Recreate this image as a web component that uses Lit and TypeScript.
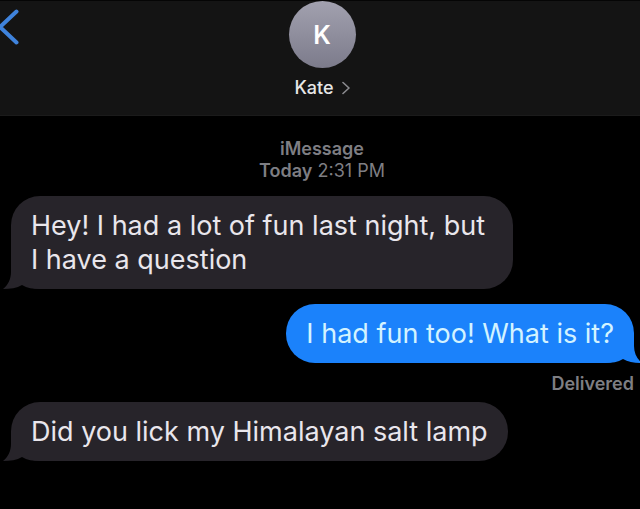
import { LitElement, html, css, svg } from "lit";
import { customElement, property } from "lit/decorators.js";

type Side = "received" | "sent";

interface Message {
  side: Side;
  text: string;
  status?: string;
}

const messages: Message[] = [
  { side: "received", text: "Hey! I had a lot of fun last night, but I have a question" },
  { side: "sent", text: "I had fun too! What is it?", status: "Delivered" },
  { side: "received", text: "Did you lick my Himalayan salt lamp" },
];

const receivedTail = svg`<path d="M8 0 V12 C8 19 5 25 0 29 C7 29 14 28 19 25 C24 28 30 29 37 29 V0 Z"/>`;
const sentTail = svg`<path d="M29 0 V12 C29 19 32 25 37 29 C30 29 23 28 18 25 C13 28 7 29 0 29 V0 Z"/>`;

@customElement("message-bubble")
export class MessageBubble extends LitElement {
  @property({ reflect: true }) side: Side = "received";

  static styles = css`
    :host {
      display: block;
      position: relative;
      isolation: isolate;
      box-sizing: border-box;
      max-width: 80.5%;
      padding: 13px 20px 12px;
      border-radius: 29px;
      background: #27242a;
      color: #e9e6ec;
      font-size: 27px;
      line-height: 34px;
    }
    :host([side="sent"]) {
      background: #1b82fb;
      color: #d3f3ff;
    }
    .tail {
      position: absolute;
      z-index: -1;
      bottom: 0;
      left: -8px;
      width: 37px;
      height: 29px;
      fill: #27242a;
    }
    :host([side="sent"]) .tail {
      left: auto;
      right: -8px;
      fill: #1b82fb;
    }
  `;

  render() {
    return html`
      <svg class="tail" viewBox="0 0 37 29" aria-hidden="true">
        ${this.side === "sent" ? sentTail : receivedTail}
      </svg>
      <slot></slot>
    `;
  }
}

@customElement("app-root")
export class AppRoot extends LitElement {
  static styles = css`
    :host {
      display: flex;
      flex-direction: column;
      min-height: 100vh;
      overflow: hidden;
      background: #000;
      font-family: Inter, "Liberation Sans", sans-serif;
    }
    button {
      padding: 0;
      border: 0;
      background: none;
      color: inherit;
      font: inherit;
      cursor: pointer;
    }
    svg {
      display: block;
    }
    .bar {
      display: grid;
      grid-template-columns: 1fr auto 1fr;
      align-items: start;
      padding: 0 0 15px 4px;
      border-top: 1px solid #050505;
      border-bottom: 1px solid #1b1b1b;
      background: #141414;
    }
    .back {
      justify-self: start;
      margin: 8px 0 0 -4px;
    }
    .contact {
      display: flex;
      flex-direction: column;
      align-items: center;
      gap: 8px;
    }
    .avatar {
      display: grid;
      place-items: center;
      width: 67px;
      height: 67px;
      border-radius: 50%;
      background: linear-gradient(#a2a1af, #7c7b8b);
      color: #fff;
      font-size: 25px;
      font-weight: 600;
    }
    .name {
      display: flex;
      align-items: center;
      gap: 8px;
      color: #e6e6e6;
      font-size: 18px;
      font-weight: 500;
      line-height: 24px;
    }
    .stamp {
      margin: 0;
      padding: 22px 0 14px 4px;
      color: #7e7e83;
      font-size: 18px;
      line-height: 22px;
      text-align: center;
    }
    .strong {
      font-weight: 600;
    }
    .thread {
      display: flex;
      flex-direction: column;
      gap: 7px;
      margin: 0;
      padding: 0 6px 40px 11px;
      list-style: none;
    }
    .row {
      display: flex;
      flex-direction: column;
      align-items: flex-start;
    }
    .row.received {
      padding-bottom: 8px;
    }
    .row.sent {
      align-items: flex-end;
    }
    .status {
      padding-top: 10px;
      color: #7e7e83;
      font-size: 18px;
      font-weight: 600;
      line-height: 22px;
    }
  `;

  render() {
    return html`
      <header class="bar">
        <button class="back" aria-label="Back">
          <svg width="20" height="38" viewBox="0 0 20 38" fill="none" stroke="#3f83dc"
            stroke-width="4" stroke-linecap="round" stroke-linejoin="round">
            <path d="M16.5 2.5 L0 18 L16.5 33.5" />
          </svg>
        </button>
        <button class="contact">
          <span class="avatar">K</span>
          <span class="name">
            Kate
            <svg width="8" height="14" viewBox="0 0 8 14" fill="none" stroke="#8b8b8f"
              stroke-width="1.6" stroke-linecap="round" stroke-linejoin="round">
              <path d="M1 1.5 L7 7 L1 12.5" />
            </svg>
          </span>
        </button>
      </header>
      <p class="stamp">
        <span class="strong">iMessage</span><br />
        <span class="strong">Today</span> 2:31 PM
      </p>
      <ul class="thread">
        ${messages.map(
          (m) => html`
            <li class="row ${m.side}">
              <message-bubble side=${m.side}>${m.text}</message-bubble>
              ${m.status ? html`<span class="status">${m.status}</span>` : null}
            </li>
          `
        )}
      </ul>
    `;
  }
}
